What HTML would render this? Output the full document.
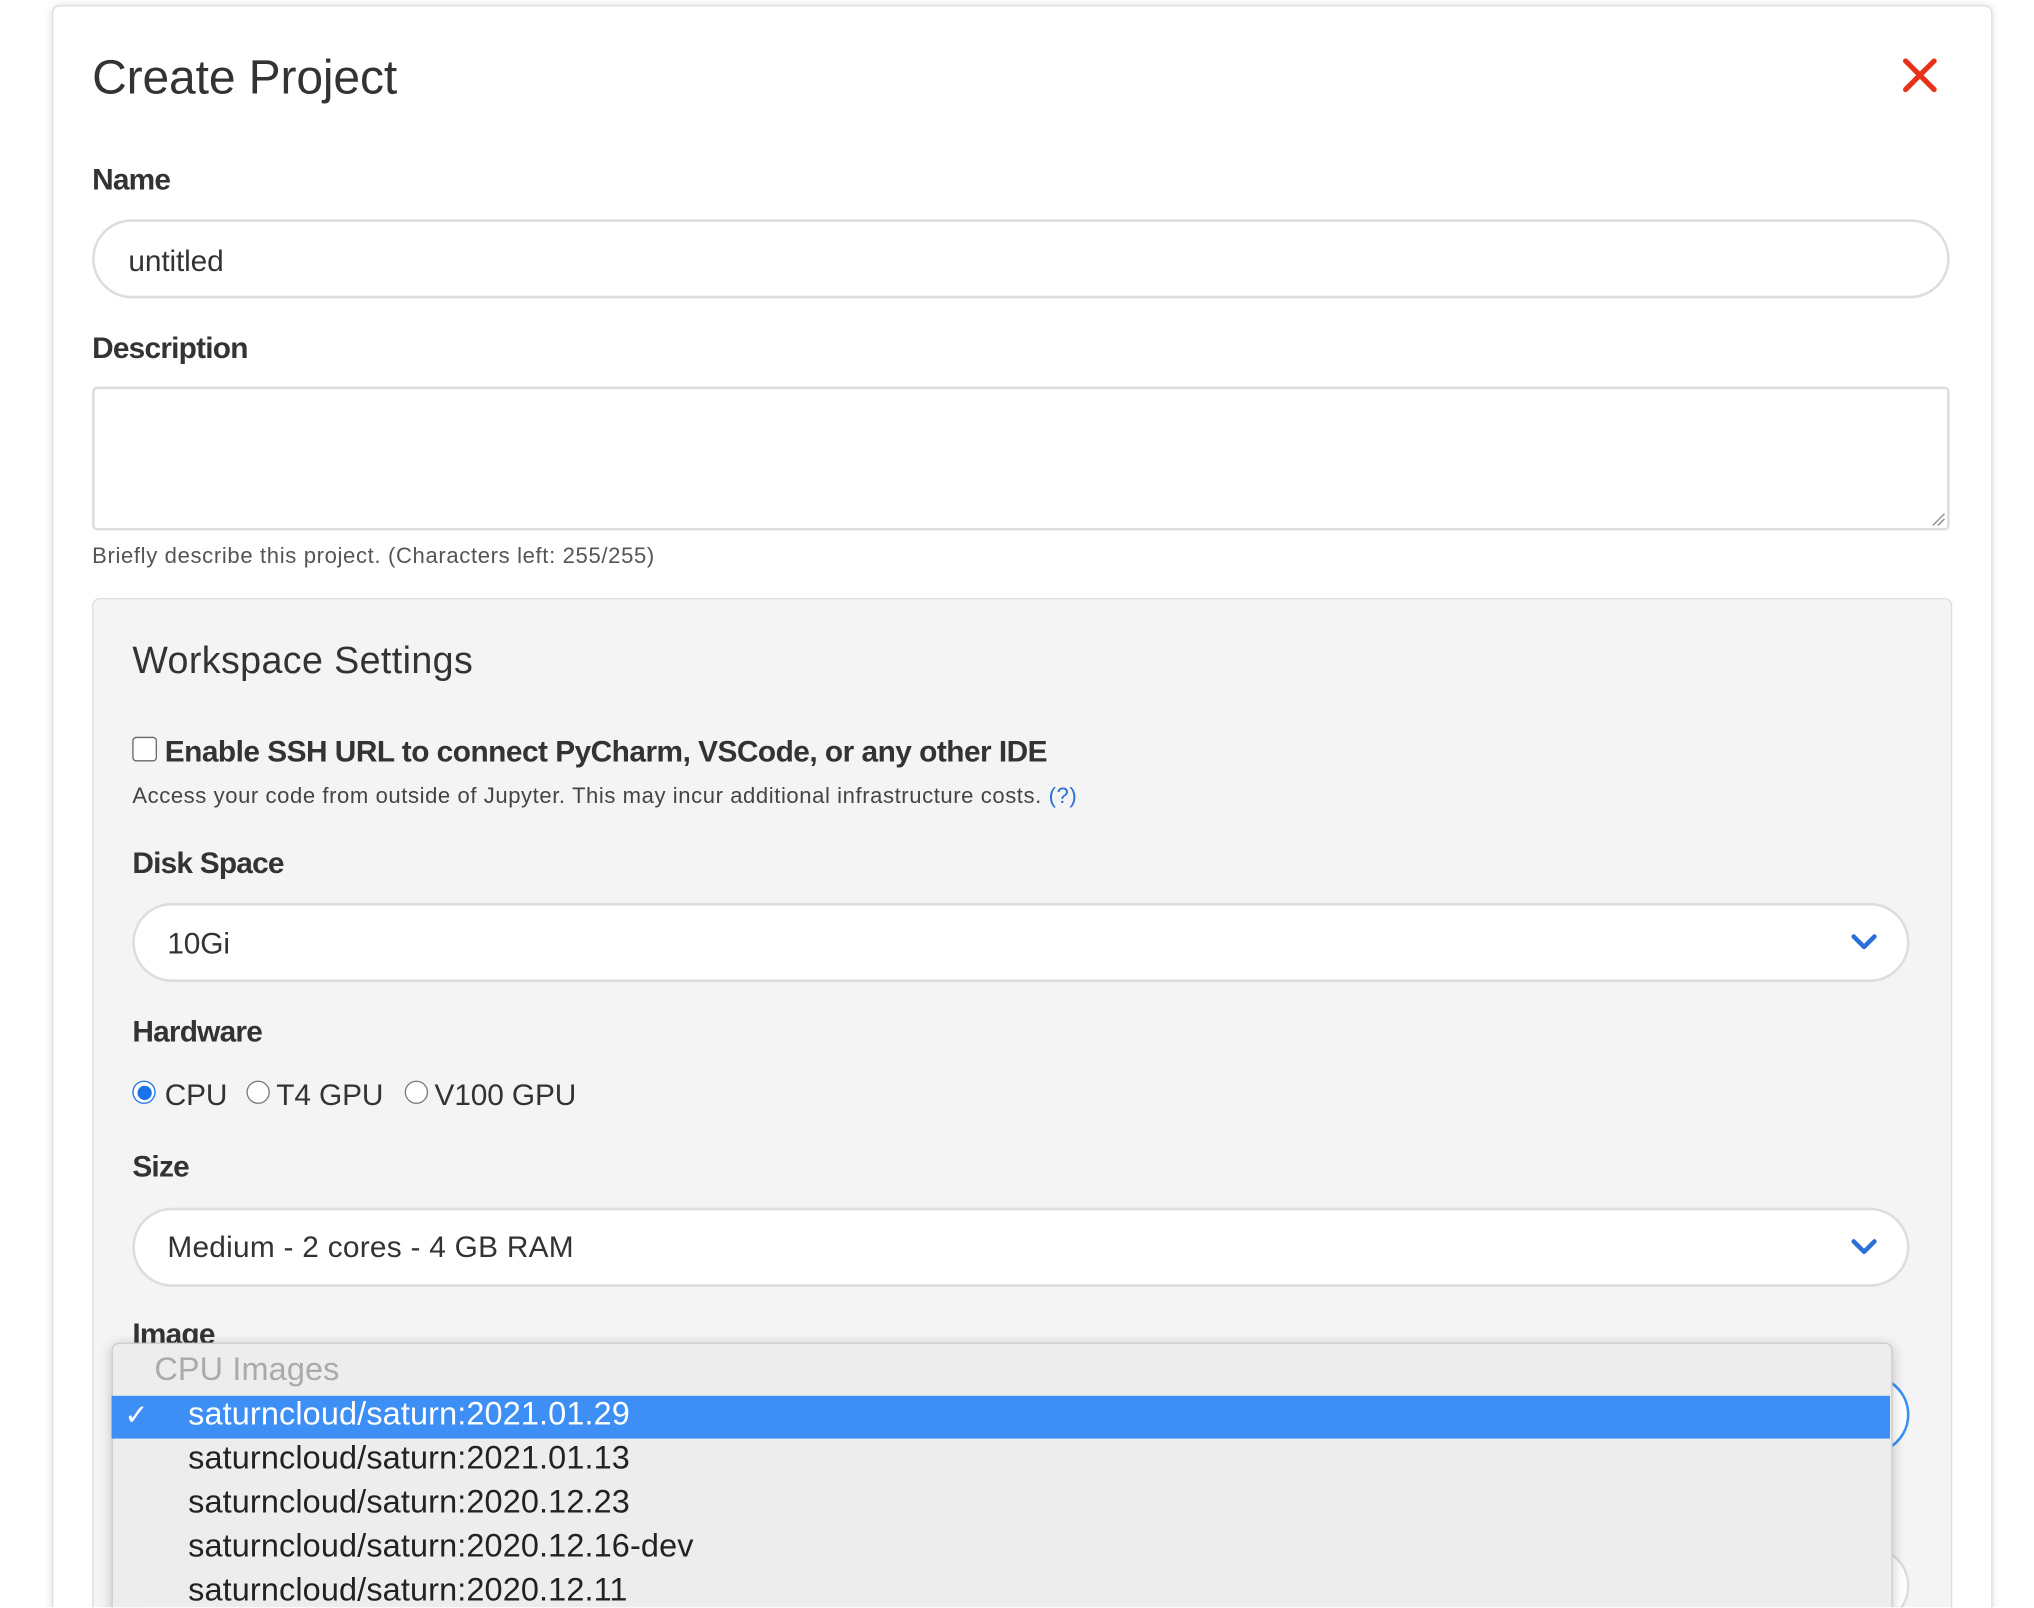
<!DOCTYPE html>
<html><head><meta charset="utf-8"><style>
html,body{margin:0;padding:0;background:#fff;overflow:hidden;width:2034px;height:1608px}
#w{position:absolute;left:0;top:0;width:1568px;height:1239px;overflow:hidden;transform:scale(1.2972);transform-origin:0 0;font-family:"Liberation Sans",sans-serif;color:#333}
.a{position:absolute}
.lbl{position:absolute;font-size:23px;font-weight:bold;letter-spacing:-0.6px;color:#333}
.inp{position:absolute;background:#fff;border:2px solid #ddd;box-sizing:border-box}
.t{position:absolute;font-size:23px;color:#333;letter-spacing:-0.1px;white-space:nowrap}
.chev{position:absolute;width:20px;height:12px}
.opt{position:absolute;left:145px;font-size:25px;color:#222;white-space:nowrap;letter-spacing:0.1px}
</style></head><body><div id="w">
<div class="a" style="left:40px;top:4px;width:1494px;height:1400px;border:1px solid #ddd;border-radius:6px;box-shadow:0 0 6px rgba(0,0,0,.12);background:#fff"></div>
<div class="t" style="left:71px;top:39px;font-size:37px;color:#333">Create Project</div>
<svg class="a" style="left:1466px;top:44px" width="28" height="28" viewBox="0 0 28 28"><path d="M3 3L25 25M25 3L3 25" stroke="#e8311a" stroke-width="4" stroke-linecap="round"/></svg>
<div class="lbl" style="left:71px;top:125px">Name</div>
<div class="inp" style="left:71px;top:169px;width:1432px;height:61px;border-radius:31px"></div>
<div class="t" style="left:99px;top:188px">untitled</div>
<div class="lbl" style="left:71px;top:255px">Description</div>
<div class="inp" style="left:71px;top:298px;width:1432px;height:111px;border-radius:4px"></div>
<svg class="a" style="left:1488px;top:394px" width="12" height="12"><path d="M2 11L11 2M6 11L11 6" stroke="#888" stroke-width="1"/></svg>
<div class="t" style="left:71px;top:419px;font-size:17px;color:#555;letter-spacing:0.5px">Briefly describe this project. (Characters left: 255/255)</div>
<div class="a" style="left:71px;top:461px;width:1432px;height:900px;background:#f4f4f4;border:1px solid #ddd;border-radius:6px"></div>
<div class="t" style="left:102px;top:494px;font-size:29px;color:#333;letter-spacing:0.3px">Workspace Settings</div>
<div class="a" style="left:102px;top:568px;width:17px;height:17px;border:1.5px solid #666;border-radius:3px;background:#fff"></div>
<div class="lbl" style="left:127px;top:566px;letter-spacing:-0.4px">Enable SSH URL to connect PyCharm, VSCode, or any other IDE</div>
<div class="t" style="left:102px;top:604px;font-size:17px;color:#444;letter-spacing:0.45px">Access your code from outside of Jupyter. This may incur additional infrastructure costs. <span style="color:#2a6fd6">(?)</span></div>
<div class="lbl" style="left:102px;top:652px">Disk Space</div>
<div class="inp" style="left:102px;top:696px;width:1370px;height:61px;border-radius:31px"></div>
<div class="t" style="left:129px;top:714px">10Gi</div>
<svg class="chev" style="left:1427px;top:720px" viewBox="0 0 20 12"><path d="M2 2L10 10L18 2" fill="none" stroke="#2b6fd8" stroke-width="3.5" stroke-linecap="round" stroke-linejoin="round"/></svg>
<div class="lbl" style="left:102px;top:782px">Hardware</div>
<div class="a" style="left:102px;top:833px;width:16px;height:16px;border:1.5px solid #1a73e8;border-radius:50%;background:#fff"></div>
<div class="a" style="left:106px;top:837px;width:11px;height:11px;border-radius:50%;background:#1a73e8"></div>
<div class="t" style="left:127px;top:831px">CPU</div>
<div class="a" style="left:190px;top:833px;width:16px;height:16px;border:1.5px solid #777;border-radius:50%;background:#fff"></div>
<div class="t" style="left:213px;top:831px">T4 GPU</div>
<div class="a" style="left:312px;top:833px;width:16px;height:16px;border:1.5px solid #777;border-radius:50%;background:#fff"></div>
<div class="t" style="left:335px;top:831px">V100 GPU</div>
<div class="lbl" style="left:102px;top:886px">Size</div>
<div class="inp" style="left:102px;top:931px;width:1370px;height:61px;border-radius:31px"></div>
<div class="t" style="left:129px;top:948px;letter-spacing:0.2px">Medium - 2 cores - 4 GB RAM</div>
<svg class="chev" style="left:1427px;top:955px" viewBox="0 0 20 12"><path d="M2 2L10 10L18 2" fill="none" stroke="#2b6fd8" stroke-width="3.5" stroke-linecap="round" stroke-linejoin="round"/></svg>
<div class="lbl" style="left:102px;top:1015px">Image</div>
<div class="inp" style="left:102px;top:1060px;width:1370px;height:61px;border-radius:31px;border-color:#3b8ff5"></div>
<div class="inp" style="left:102px;top:1192px;width:1370px;height:61px;border-radius:31px"></div>
<div class="a" style="left:86px;top:1035px;width:1371px;height:320px;background:#ededed;border:1px solid #ccc;border-radius:6px;box-shadow:0 2px 10px rgba(0,0,0,.2)"></div>
<div class="opt" style="left:119px;top:1042px;color:#aaa">CPU Images</div>
<div class="a" style="left:86px;top:1076px;width:1371px;height:33px;background:#3d8ef5"></div>
<div class="a" style="left:96px;top:1078px;color:#fff;font-size:22px">✓</div>
<div class="opt" style="top:1076px;color:#fff">saturncloud/saturn:2021.01.29</div>
<div class="opt" style="top:1110px">saturncloud/saturn:2021.01.13</div>
<div class="opt" style="top:1144px">saturncloud/saturn:2020.12.23</div>
<div class="opt" style="top:1178px">saturncloud/saturn:2020.12.16-dev</div>
<div class="opt" style="top:1212px">saturncloud/saturn:2020.12.11</div>
</div></body></html>
